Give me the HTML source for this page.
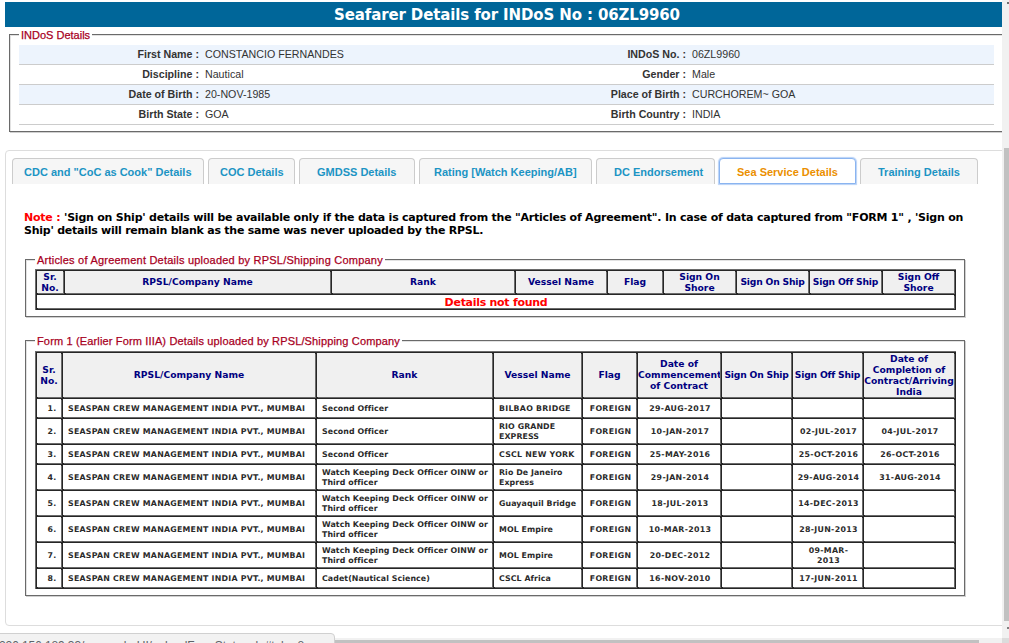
<!DOCTYPE html>
<html>
<head>
<meta charset="utf-8">
<title>Seafarer Details</title>
<style>
html,body{margin:0;padding:0;}
body{width:1009px;height:643px;overflow:hidden;position:relative;background:#fff;font-family:"Liberation Sans",sans-serif;font-size:11px;color:#333;}
.abs{position:absolute;}
#hdr{left:5px;top:2px;width:1004px;height:25px;background:#006699;color:#fff;font-family:"DejaVu Sans",sans-serif;font-weight:bold;font-size:15px;letter-spacing:-0.13px;line-height:27px;text-align:center;white-space:nowrap;}
.fs{position:absolute;box-sizing:border-box;border:1px solid #6a6a6a;box-shadow:inset 1px 1px 0 #e2e2e2, 1px 1px 0 #d0d0d0;}
.fs .lg{position:absolute;top:-7px;left:9px;background:#fff;padding:0 2px;color:#a8001e;-webkit-text-stroke:0.25px #a8001e;font-size:11px;line-height:14px;white-space:nowrap;}
.row{position:absolute;left:19px;width:975px;height:19px;border-bottom:1px solid #ccc;line-height:19px;font-size:10.67px;}
.row.alt{background:#edf4fd;}
.row b{position:absolute;text-align:right;font-weight:bold;color:#333;white-space:nowrap;}
.row span{position:absolute;white-space:nowrap;color:#333;}
.l1{left:0;width:180px;} .v1{left:186px;}
.l2{left:400px;width:267px;} .v2{left:673px;}
#tabs{left:5px;top:150px;width:1010px;height:476px;border:1px solid #ddd;border-radius:4px;box-sizing:border-box;}
.tab{position:absolute;top:158px;height:26px;box-sizing:border-box;border:1px solid #ccc;border-bottom:none;border-radius:4px 4px 0 0;background:#f6f6f6;color:#1c94c4;font-weight:bold;font-size:11px;line-height:26px;white-space:nowrap;}
.tab span{position:absolute;top:0;}
.tab.act{background:#fff;color:#eb8f00;border:1px solid #8ab4f0;box-shadow:0 0 1px 1px #b9d2f7;}
#note{left:24px;top:211px;font-family:"DejaVu Sans",sans-serif;font-weight:bold;font-size:11px;letter-spacing:-0.222px;line-height:13px;color:#000;white-space:nowrap;}
#note .r{color:#f00;}
table.g{position:absolute;border-collapse:separate;border-spacing:2px;background:#262626;box-shadow:inset 1px 1px 0 #6b6b6b;table-layout:fixed;font-family:"DejaVu Sans",sans-serif;font-weight:bold;}
table.g td,table.g th{border:0;padding:0;overflow:hidden;background:#fff;white-space:nowrap;box-shadow:1px 1px 0 #6b6b6b;}
table.g th{background:#f0f0f0;color:#000080;font-size:9.2px;letter-spacing:0;line-height:11px;text-align:center;}
table.g td{font-size:7.85px;letter-spacing:0.24px;line-height:10px;color:#2a2a2a;padding-top:1px;}
td.m{letter-spacing:0.08px !important;}
th.u{padding-bottom:1px !important;}
th.v{padding-bottom:2px !important;}
th.n{letter-spacing:-0.2px !important;}
td.c{text-align:center;padding-left:2px !important;letter-spacing:0.32px !important;}
td.dn{text-align:center;padding:2px 0 0 1px !important;color:#f00 !important;font-size:11px !important;letter-spacing:-0.28px !important;line-height:11px !important;}
td.r{text-align:right;padding-right:4.5px !important;}
td.l{text-align:left;padding-left:5px !important;}
#sb{left:1002px;top:0;width:7px;height:643px;background:#f1f1f1;}
#sbt{left:1004px;top:148px;width:5px;height:473px;background:#c1c1c1;}
#hsb{left:0;top:638px;width:1002px;height:5px;background:#f1f1f1;}
#hsbt{left:20px;top:640px;width:959px;height:3px;background:#c1c1c1;}
#cor{left:1002px;top:638px;width:7px;height:5px;background:#dcdcdc;}
#stat{left:-1px;top:633px;width:336px;height:20px;background:#f2f2f2;border:1px solid #d0d0d0;border-radius:0 4px 0 0;box-sizing:border-box;color:#5f6368;font-size:12px;line-height:25px;padding-left:0px;letter-spacing:-0.1px;text-indent:-1px;white-space:nowrap;overflow:hidden;}
</style>
</head>
<body>
<div id="hdr" class="abs">Seafarer Details for INDoS No : 06ZL9960</div>
<div class="fs" style="left:9px;top:34px;width:1010px;height:98px;"><div class="lg">INDoS Details</div></div>
<div class="row alt" style="top:45px;"><b class="l1">First Name :</b><span class="v1">CONSTANCIO FERNANDES</span><b class="l2">INDoS No. :</b><span class="v2">06ZL9960</span></div>
<div class="row" style="top:65px;"><b class="l1">Discipline :</b><span class="v1">Nautical</span><b class="l2">Gender :</b><span class="v2">Male</span></div>
<div class="row alt" style="top:85px;"><b class="l1">Date of Birth :</b><span class="v1">20-NOV-1985</span><b class="l2">Place of Birth :</b><span class="v2">CURCHOREM~ GOA</span></div>
<div class="row" style="top:105px;"><b class="l1">Birth State :</b><span class="v1">GOA</span><b class="l2">Birth Country :</b><span class="v2">INDIA</span></div>
<div id="tabs" class="abs"></div>
<div class="tab" style="left:12px;width:192px;"><span id="tb0" style="left:11px">CDC and "CoC as Cook" Details</span></div>
<div class="tab" style="left:208px;width:87px;"><span id="tb1" style="left:11px">COC Details</span></div>
<div class="tab" style="left:299px;width:116px;"><span id="tb2" style="left:17px">GMDSS Details</span></div>
<div class="tab" style="left:419px;width:173px;"><span id="tb3" style="left:14px">Rating [Watch Keeping/AB]</span></div>
<div class="tab" style="left:596px;width:119px;"><span id="tb4" style="left:17px">DC Endorsement</span></div>
<div class="tab act" style="left:719px;width:137px;"><span id="tb5" style="left:17px">Sea Service Details</span></div>
<div class="tab" style="left:860px;width:118px;"><span id="tb6" style="left:17px">Training Details</span></div>
<div id="note" class="abs"><span class="r">Note :</span> 'Sign on Ship' details will be available only if the data is captured from the "Articles of Agreement". In case of data captured from "FORM 1" , 'Sign on<br><span style="letter-spacing:-0.245px">Ship' details will remain blank as the same was never uploaded by the RPSL.</span></div>
<div class="fs" style="left:25px;top:259px;width:940px;height:58px;"><div class="lg" style="letter-spacing:0.22px">Articles of Agreement Details uploaded by RPSL/Shipping Company</div></div>
<table class="g" style="left:35px;top:269px;width:921px;"><colgroup><col style="width:26px"><col style="width:265px"><col style="width:182px"><col style="width:90px"><col style="width:54px"><col style="width:71px"><col style="width:71px"><col style="width:71px"><col style="width:71px"></colgroup>
<tr style="height:22px;line-height:10.5px"><th style="line-height:10.5px;padding-top:1px">Sr.<br>No.</th><th class="u">RPSL/Company Name</th><th class="u">Rank</th><th class="u">Vessel Name</th><th class="u">Flag</th><th style="line-height:10.5px;padding-top:1px">Sign On<br>Shore</th><th class="n u">Sign On Ship</th><th class="n u">Sign Off Ship</th><th style="line-height:10.5px;padding-top:1px">Sign Off<br>Shore</th></tr>
<tr style="height:13px"><td colspan="9" class="dn">Details not found</td></tr></table>
<div class="fs" style="left:25px;top:340px;width:940px;height:256px;"><div class="lg" style="letter-spacing:0.15px">Form 1 (Earlier Form IIIA) Details uploaded by RPSL/Shipping Company</div></div>
<table class="g" style="left:35px;top:351px;width:921px;"><colgroup><col style="width:24px"><col style="width:252px"><col style="width:175px"><col style="width:87px"><col style="width:53px"><col style="width:82px"><col style="width:69px"><col style="width:69px"><col style="width:90px"></colgroup>
<tr style="height:44px"><th>Sr.<br>No.</th><th class="v">RPSL/Company Name</th><th class="v">Rank</th><th class="v">Vessel Name</th><th class="v">Flag</th><th class="v">Date of<br>Commencement<br>of Contract</th><th class="n v">Sign On Ship</th><th class="n v">Sign Off Ship</th><th>Date of<br>Completion of<br>Contract/Arriving<br>India</th></tr>
<tr style="height:18px"><td class="r">1.</td><td class="l">SEASPAN CREW MANAGEMENT INDIA PVT., MUMBAI</td><td class="l m">Second Officer</td><td class="l">BILBAO BRIDGE</td><td class="c">FOREIGN</td><td class="c">29-AUG-2017</td><td></td><td class="c"></td><td class="c"></td></tr>
<tr style="height:24px"><td class="r">2.</td><td class="l">SEASPAN CREW MANAGEMENT INDIA PVT., MUMBAI</td><td class="l m">Second Officer</td><td class="l m">RIO GRANDE<br>EXPRESS</td><td class="c">FOREIGN</td><td class="c">10-JAN-2017</td><td></td><td class="c">02-JUL-2017</td><td class="c">04-JUL-2017</td></tr>
<tr style="height:18px"><td class="r">3.</td><td class="l">SEASPAN CREW MANAGEMENT INDIA PVT., MUMBAI</td><td class="l m">Second Officer</td><td class="l">CSCL NEW YORK</td><td class="c">FOREIGN</td><td class="c">25-MAY-2016</td><td></td><td class="c">25-OCT-2016</td><td class="c">26-OCT-2016</td></tr>
<tr style="height:24px"><td class="r">4.</td><td class="l">SEASPAN CREW MANAGEMENT INDIA PVT., MUMBAI</td><td class="l m">Watch Keeping Deck Officer OINW or<br>Third officer</td><td class="l m">Rio De Janeiro<br>Express</td><td class="c">FOREIGN</td><td class="c">29-JAN-2014</td><td></td><td class="c">29-AUG-2014</td><td class="c">31-AUG-2014</td></tr>
<tr style="height:24px"><td class="r">5.</td><td class="l">SEASPAN CREW MANAGEMENT INDIA PVT., MUMBAI</td><td class="l m">Watch Keeping Deck Officer OINW or<br>Third officer</td><td class="l m">Guayaquil Bridge</td><td class="c">FOREIGN</td><td class="c">18-JUL-2013</td><td></td><td class="c">14-DEC-2013</td><td class="c"></td></tr>
<tr style="height:24px"><td class="r">6.</td><td class="l">SEASPAN CREW MANAGEMENT INDIA PVT., MUMBAI</td><td class="l m">Watch Keeping Deck Officer OINW or<br>Third officer</td><td class="l m">MOL Empire</td><td class="c">FOREIGN</td><td class="c">10-MAR-2013</td><td></td><td class="c">28-JUN-2013</td><td class="c"></td></tr>
<tr style="height:24px"><td class="r">7.</td><td class="l">SEASPAN CREW MANAGEMENT INDIA PVT., MUMBAI</td><td class="l m">Watch Keeping Deck Officer OINW or<br>Third officer</td><td class="l m">MOL Empire</td><td class="c">FOREIGN</td><td class="c">20-DEC-2012</td><td></td><td class="c">09-MAR-<br>2013</td><td class="c"></td></tr>
<tr style="height:18px"><td class="r">8.</td><td class="l">SEASPAN CREW MANAGEMENT INDIA PVT., MUMBAI</td><td class="l m">Cadet(Nautical Science)</td><td class="l m">CSCL Africa</td><td class="c">FOREIGN</td><td class="c">16-NOV-2010</td><td></td><td class="c">17-JUN-2011</td><td class="c"></td></tr>
</table>
<div id="hsb" class="abs"></div><div id="hsbt" class="abs"></div>
<div id="sb" class="abs"></div><div id="sbt" class="abs"></div><div id="cor" class="abs"></div>
<div class="abs" style="left:1007px;top:2px;width:2px;height:2px;background:#707070"></div><div class="abs" style="left:1007px;top:627px;width:2px;height:2px;background:#808080"></div>
<div id="stat" class="abs">220.156.189.33/esamudraUI/uploadFormStatus.do#tabs-8</div>
</body>
</html>
